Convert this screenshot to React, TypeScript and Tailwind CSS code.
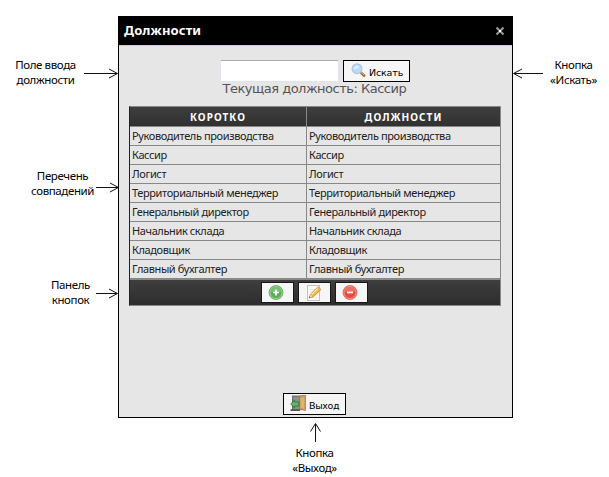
import type { ReactNode } from "react";

const positions = [
  "Руководитель производства",
  "Кассир",
  "Логист",
  "Территориальный менеджер",
  "Генеральный директор",
  "Начальник склада",
  "Кладовщик",
  "Главный бухгалтер",
];

function RightArrow({ width }: { width: number }) {
  return (
    <svg width={width} height="11" viewBox={`0 0 ${width} 11`} className="shrink-0" fill="none" stroke="#111">
      <path d={`M0 5.5H${width - 1}`} shapeRendering="crispEdges" />
      <path d={`M${width - 9} 1L${width - 0.5} 5.5L${width - 9} 10`} />
    </svg>
  );
}

function LeftArrow() {
  return (
    <svg width="30" height="11" viewBox="0 0 30 11" className="shrink-0" fill="none" stroke="#111">
      <path d="M1 5.5H30" shapeRendering="crispEdges" />
      <path d="M9 1L.5 5.5L9 10" />
    </svg>
  );
}

function Note({ lines, className = "" }: { lines: string[]; className?: string }) {
  return (
    <div className={`text-center font-['Noto_Sans','Open_Sans',sans-serif] text-[11.5px] leading-[15px] tracking-[-0.38px] whitespace-nowrap text-black ${className}`}>
      {lines.map((line) => (
        <div key={line}>{line}</div>
      ))}
    </div>
  );
}

function SearchIcon() {
  return (
    <svg width="16" height="16" viewBox="0 0 16 16" className="shrink-0">
      <path d="M9.8 9.4L13.2 12.7" stroke="#a66b32" strokeWidth="2.6" strokeLinecap="round" />
      <path d="M9.9 8.8L13 11.8" stroke="#e6b06f" strokeWidth="1" />
      <circle cx="6" cy="5.7" r="4.9" fill="#b9d9f8" stroke="#b1c5e4" strokeWidth="1.2" />
      <path d="M2.8 6A3.2 3.2 0 0 1 8.5 4C6.6 4.2 5.4 6.8 2.8 6Z" fill="#e2f1ff" />
    </svg>
  );
}

function RoundIcon({ kind }: { kind: "add" | "remove" }) {
  const add = kind === "add";
  return (
    <svg width="16" height="16" viewBox="0 0 16 16" className="mr-[3px]">
      <circle cx="8" cy="7.5" r="7" fill={add ? "#58ad55" : "#e7493f"} stroke={add ? "#6aa967" : "#d9665d"} strokeWidth=".8" />
      <circle cx="8" cy="7.5" r="6" fill="none" stroke={add ? "#a5d8a0" : "#f5a29a"} strokeWidth=".9" />
      <path d="M3 7A5 5 0 0 1 13 7Z" fill={add ? "#83c77d" : "#f17d70"} opacity=".75" />
      <path d={add ? "M5 7.5H11M8 4.5V10.5" : "M5 7.5H11"} stroke="white" strokeWidth="1.7" />
    </svg>
  );
}

function EditIcon() {
  return (
    <svg width="16" height="16" viewBox="0 0 16 16" className="mr-[1px]">
      <rect x="1.5" y=".5" width="12" height="15" fill="#fafafa" stroke="#c1c1c1" />
      <path d="M4 4.5H9M4 7H7M9 13H11" stroke="#e3e3e3" />
      <path d="M3.2 13L4.5 9.2L12 1.8L15 4.6L7.2 12Z" fill="#f3b93e" stroke="#b98034" strokeWidth=".7" />
      <path d="M5.5 9.6L12.4 3" stroke="#ffe69a" strokeWidth="1.3" />
      <path d="M11 2.8L13.8 5.7L15.2 4.4L12.2 1.6Z" fill="#dfaf83" />
      <path d="M3.2 13L4.3 9.8L6.5 12Z" fill="#f3d7ad" />
      <path d="M3 13L3.5 11.6L4.6 12.5Z" fill="#444" />
    </svg>
  );
}

function ExitIcon() {
  return (
    <svg width="16" height="16" viewBox="0 0 16 16" className="shrink-0">
      <path d="M2 .5H14V15H2Z" fill="#6c706c" />
      <path d="M3.2 1.7H9V14H3.2Z" fill="#8d928d" />
      <path d="M.5 14.2H10V16H.5Z" fill="#555955" />
      <path d="M9.5 1.5L15.5 0V15.6L9.5 14Z" fill="#d4a05f" stroke="#a5733c" strokeWidth=".7" />
      <path d="M11 3.2L14 2.7V13.3L11 12.7Z" fill="#dfb078" />
      <path d="M.7 9L4.6 5.3V7H8.8V11H4.6V12.8Z" fill="#65b866" stroke="#29723a" strokeWidth=".8" />
    </svg>
  );
}

function ToolButton({ children }: { children: ReactNode }) {
  return (
    <button className="flex h-[21px] w-[33px] items-center justify-center border border-[#171717] bg-[#f6f6f6]">
      {children}
    </button>
  );
}

export default function App() {
  return (
    <div className="flex h-[477px] w-[609px] items-start overflow-hidden bg-white">
      <aside className="w-[118px] shrink-0 pt-[57px]">
        <div className="flex h-[30px] items-center pl-[14px]">
          <Note lines={["Поле ввода", "должности"]} className="w-[63px]" />
          <div className="mt-[2px] ml-[7px] flex"><RightArrow width={34} /></div>
        </div>
        <div className="mt-[81px] flex h-[30px] items-center pl-[31px]">
          <Note lines={["Перечень", "совпадений"]} className="w-[64px]" />
          <div className="mt-[9px] ml-[2px] flex"><RightArrow width={23} /></div>
        </div>
        <div className="mt-[79px] flex h-[30px] items-center pl-[50px]">
          <Note lines={["Панель", "кнопок"]} className="w-[41px]" />
          <div className="mt-[2px] ml-[5px] flex"><RightArrow width={22} /></div>
        </div>
      </aside>

      <main className="flex w-[395px] shrink-0 flex-col pt-[16px]">
        <section className="flex h-[402px] flex-col border border-black bg-[#e6e6e6]">
          <header className="flex h-[29px] items-center justify-between border-b border-[#d6cfaa] bg-black pr-[7px] pl-[5px]">
            <h1 className="mb-[2px] font-['Noto_Sans','Open_Sans',sans-serif] text-[13px] leading-[18px] font-bold tracking-[0.1px] text-white">Должности</h1>
            <button aria-label="Закрыть">
              <svg width="10" height="10" viewBox="0 0 10 10">
                <path d="M1.5 1.5L8.5 8.5M8.5 1.5L1.5 8.5" stroke="#949999" strokeWidth="2.2" />
                <rect x="4" y="4" width="2" height="2" fill="white" />
              </svg>
            </button>
          </header>

          <div className="mt-[14px] flex h-[22px] pl-[101px]">
            <input className="h-[22px] w-[119px] rounded-[2px] border border-[#dfe4ec] border-t-[#a9abb1] bg-white" />
            <button className="ml-[4px] flex h-[22px] w-[67px] items-start border border-black bg-[#f6f6f6] pt-[2px] pl-[7px] font-['DejaVu_Sans',sans-serif] text-[9.5px] text-black">
              <SearchIcon />
              <span className="mt-[3px] ml-[2px] leading-[13px] tracking-[-0.15px]">Искать</span>
            </button>
          </div>
          <p className="h-[24px] pl-[103.5px] font-['DejaVu_Sans',sans-serif] text-[13px] leading-[14px] tracking-[-0.5px] whitespace-nowrap text-[#555]">Текущая должность: Кассир</p>

          <div className="ml-[10px] w-[372px] border border-[#888] border-l-[#222]">
            <table className="w-full table-fixed border-separate border-spacing-0 font-['Noto_Sans','Open_Sans',sans-serif] text-[11px] text-[#222]">
              <colgroup>
                <col className="w-[177px]" />
                <col />
              </colgroup>
              <thead>
                <tr className="h-[20px] bg-linear-to-b from-[#3e3e3e] to-[#303030] text-[10px] leading-[14px] tracking-[1.05px] text-white">
                  <th className="border-r border-b border-[#888] p-0">КОРОТКО</th>
                  <th className="border-b border-[#888] p-0">ДОЛЖНОСТИ</th>
                </tr>
              </thead>
              <tbody>
                {positions.map((name) => (
                  <tr key={name} className="h-[19px] leading-[14px] tracking-[-0.38px]">
                    <td className="border-r border-b border-[#888] py-0 pl-[2px] whitespace-nowrap">{name}</td>
                    <td className="border-b border-[#888] py-0 pl-[2px] whitespace-nowrap">{name}</td>
                  </tr>
                ))}
              </tbody>
            </table>
            <div className="flex h-[26px] justify-center gap-[4px] border-t border-[#888] bg-linear-to-b from-[#3e3e3e] to-[#2d2d2d] pt-[2px] pr-[2px]">
              <ToolButton><RoundIcon kind="add" /></ToolButton>
              <ToolButton><EditIcon /></ToolButton>
              <ToolButton><RoundIcon kind="remove" /></ToolButton>
            </div>
          </div>
          <button className="mt-auto mb-[2px] ml-[164px] flex h-[22px] w-[63px] items-start border border-black bg-[#f6f6f6] pt-[1px] pl-[6px] font-['DejaVu_Sans',sans-serif] text-[9.5px] text-black">
            <ExitIcon />
            <span className="mt-[4px] ml-[3px] leading-[13px] tracking-[-0.35px]">Выход</span>
          </button>
        </section>
        <div className="mt-[5px] flex flex-col items-center pr-[2px]">
          <svg width="12" height="19" viewBox="0 0 12 19" fill="none" stroke="#111">
            <path d="M6.5 1V19" shapeRendering="crispEdges" />
            <path d="M1.5 8.5L6.5 .5L11.5 8.5" />
          </svg>
          <Note lines={["Кнопка", "«Выход»"]} className="mt-[3px]" />
        </div>
      </main>

      <aside className="flex pt-[57px]">
        <div className="flex h-[32px] items-center"><LeftArrow /></div>
        <Note lines={["Кнопка", "«Искать»"]} className="ml-[6px] w-[49px]" />
      </aside>
    </div>
  );
}
